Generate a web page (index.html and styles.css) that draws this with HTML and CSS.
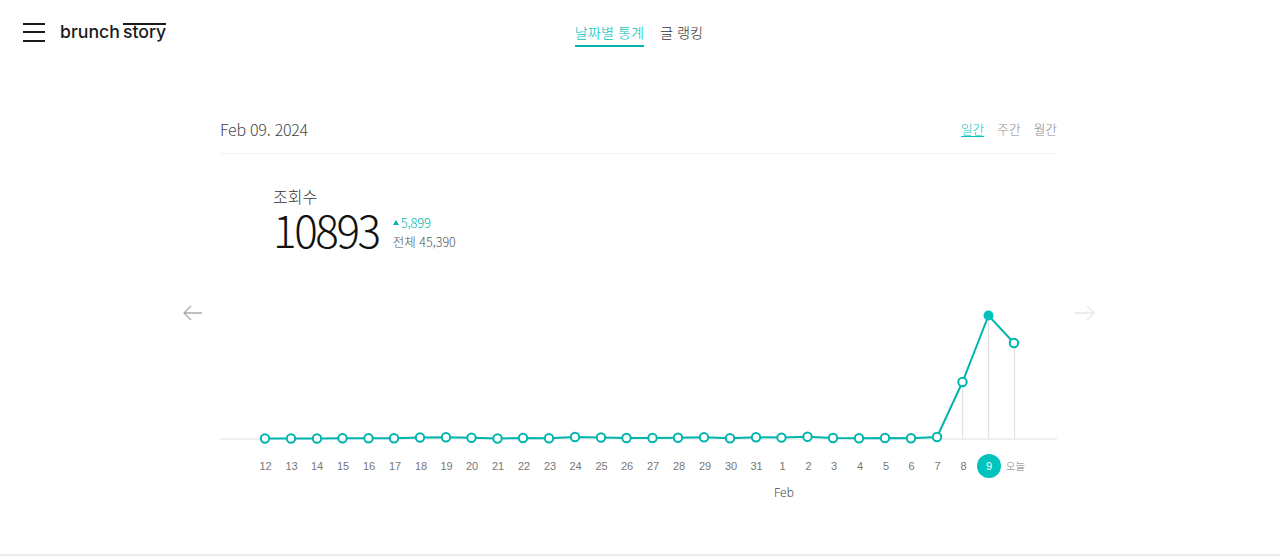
FILE: index.html
```html
<!DOCTYPE html>
<html lang="ko">
<head>
  <meta charset="UTF-8" />
  <meta name="viewport" content="width=device-width, initial-scale=1" />
  <title>brunchstory 통계</title>
  <link rel="stylesheet" href="styles.css">
</head>
<body>

  <header class="topbar">
    <div class="brand">
      <button class="menu-btn" type="button" aria-label="메뉴">
        <span></span><span></span><span></span>
      </button>
      <a class="logo" href="#">brunch<span class="logo-story">story</span></a>
    </div>
    <nav class="tabs">
      <a class="tab active" href="#">날짜별 통계</a>
      <a class="tab" href="#">글 랭킹</a>
    </nav>
  </header>

  <main class="stats">
    <div class="date-row">
      <div class="date">Feb 09. 2024</div>
      <div class="periods">
        <a class="period active" href="#">일간</a>
        <a class="period" href="#">주간</a>
        <a class="period" href="#">월간</a>
      </div>
    </div>

    <div class="summary">
      <div class="summary-title">조회수</div>
      <div class="summary-row">
        <div class="summary-count">10893</div>
        <div class="summary-side">
          <div class="summary-diff"><span class="up"></span>5,899</div>
          <div class="summary-total">전체 45,390</div>
        </div>
      </div>
    </div>

    <svg class="chart" width="1000" height="226" viewBox="180 290 1000 226">
      <!-- arrows -->
      <path class="arrow-prev" d="M202 313H184M191 306l-7 7 7 7" />
      <path class="arrow-next" d="M1075 313h19M1087 306l7 7-7 7" />

      <!-- base line and drops -->
      <line class="base" x1="220" y1="439" x2="1057" y2="439" />
      <line class="drop" x1="962.5" y1="382" x2="962.5" y2="439" />
      <line class="drop" x1="988.5" y1="315" x2="988.5" y2="439" />
      <line class="drop" x1="1014.5" y1="343" x2="1014.5" y2="439" />

      <polyline class="line" points="265,438.5 291,438.5 317,438.5 342.5,438.3 368.5,438.2 394,438.2 420,437.5 446,437.3 471.5,437.8 497.5,438.5 523,438 549,438.3 575,437 601,437.5 626.5,438 652.5,438 678,437.8 704,437.3 730,438.2 756,437.3 781.5,437.6 807.5,436.8 833,438 859,438.3 885,438 911,438.3 937,437 962.5,382 988.5,315.5 1014,343" />

      <circle class="dot" cx="265" cy="438.5" r="4.2" />
      <circle class="dot" cx="291" cy="438.5" r="4.2" />
      <circle class="dot" cx="317" cy="438.5" r="4.2" />
      <circle class="dot" cx="342.5" cy="438.3" r="4.2" />
      <circle class="dot" cx="368.5" cy="438.2" r="4.2" />
      <circle class="dot" cx="394" cy="438.2" r="4.2" />
      <circle class="dot" cx="420" cy="437.5" r="4.2" />
      <circle class="dot" cx="446" cy="437.3" r="4.2" />
      <circle class="dot" cx="471.5" cy="437.8" r="4.2" />
      <circle class="dot" cx="497.5" cy="438.5" r="4.2" />
      <circle class="dot" cx="523" cy="438" r="4.2" />
      <circle class="dot" cx="549" cy="438.3" r="4.2" />
      <circle class="dot" cx="575" cy="437" r="4.2" />
      <circle class="dot" cx="601" cy="437.5" r="4.2" />
      <circle class="dot" cx="626.5" cy="438" r="4.2" />
      <circle class="dot" cx="652.5" cy="438" r="4.2" />
      <circle class="dot" cx="678" cy="437.8" r="4.2" />
      <circle class="dot" cx="704" cy="437.3" r="4.2" />
      <circle class="dot" cx="730" cy="438.2" r="4.2" />
      <circle class="dot" cx="756" cy="437.3" r="4.2" />
      <circle class="dot" cx="781.5" cy="437.6" r="4.2" />
      <circle class="dot" cx="807.5" cy="436.8" r="4.2" />
      <circle class="dot" cx="833" cy="438" r="4.2" />
      <circle class="dot" cx="859" cy="438.3" r="4.2" />
      <circle class="dot" cx="885" cy="438" r="4.2" />
      <circle class="dot" cx="911" cy="438.3" r="4.2" />
      <circle class="dot" cx="937" cy="437" r="4.2" />
      <circle class="dot" cx="962.5" cy="382" r="4.2" />
      <circle class="dot dot-on" cx="988.5" cy="315.5" r="4" />
      <circle class="dot" cx="1014" cy="343" r="4.2" />

      <!-- day labels -->
      <circle class="today-mark" cx="989" cy="466" r="12" />
      <g class="days">
        <text x="265.5" y="470">12</text>
        <text x="291.5" y="470">13</text>
        <text x="317" y="470">14</text>
        <text x="343" y="470">15</text>
        <text x="369" y="470">16</text>
        <text x="395" y="470">17</text>
        <text x="421" y="470">18</text>
        <text x="446.5" y="470">19</text>
        <text x="472" y="470">20</text>
        <text x="498" y="470">21</text>
        <text x="524" y="470">22</text>
        <text x="550" y="470">23</text>
        <text x="575.5" y="470">24</text>
        <text x="601.5" y="470">25</text>
        <text x="627" y="470">26</text>
        <text x="653" y="470">27</text>
        <text x="679" y="470">28</text>
        <text x="705" y="470">29</text>
        <text x="731" y="470">30</text>
        <text x="756.5" y="470">31</text>
        <text x="782.5" y="470">1</text>
        <text x="808.5" y="470">2</text>
        <text x="834" y="470">3</text>
        <text x="860" y="470">4</text>
        <text x="886" y="470">5</text>
        <text x="911.5" y="470">6</text>
        <text x="937.5" y="470">7</text>
        <text x="963.5" y="470">8</text>
        <text class="day-on" x="989" y="470">9</text>
        <text class="day-today" x="1015.5" y="470">오늘</text>
      </g>
      <text class="month" x="784" y="497">Feb</text>
    </svg>
  </main>

  <div class="page-end"></div>

</body>
</html>
```

FILE: styles.css
```css
* {
  margin: 0;
  padding: 0;
  box-sizing: border-box;
}

body {
  background-color: #fff;
  color: #333;
  font-family: 'Noto Sans CJK KR', 'Noto Sans', sans-serif;
  height: 557px;
  overflow: hidden;
}

a {
  text-decoration: none;
  color: inherit;
}

.topbar {
  height: 64px;
  display: grid;
  grid-template-columns: 1fr auto 1fr;
  align-items: start;
}

.brand {
  display: flex;
  align-items: center;
  padding: 22px 0 0 23px;
  gap: 15px;
}

.menu-btn {
  width: 22px;
  height: 19px;
  border: none;
  background: none;
  display: flex;
  flex-direction: column;
  justify-content: space-between;
}

.menu-btn span {
  display: block;
  height: 2px;
  background-color: #1a1a1a;
}

.logo {
  font-family: 'Inter', sans-serif;
  font-size: 17.7px;
  font-weight: 500;
  color: #1a1a1a;
  line-height: 20px;
  display: flex;
}

.logo-story {
  border-top: 2px solid #1a1a1a;
  line-height: 14px;
  height: 19px;
  margin-left: 3px;
  margin-top: 1px;
}

.tabs {
  display: flex;
  gap: 16px;
  padding-top: 20px;
  margin-left: -2px;
}

.tab {
  font-size: 14.2px;
  font-weight: 300;
  color: #333;
  line-height: 25px;
  height: 27px;
}

.tab.active {
  color: #00c3bd;
  border-bottom: 2px solid #00b5ae;
}

.stats {
  margin-left: 220px;
  width: 837px;
  padding-top: 46px;
}

.date-row {
  height: 44px;
  display: flex;
  justify-content: space-between;
  align-items: flex-start;
  border-bottom: 1px solid #f2f2f2;
}

.date {
  font-size: 16px;
  font-weight: 300;
  line-height: 38px;
  letter-spacing: -0.25px;
  color: #444;
}

.periods {
  display: flex;
  gap: 13px;
  padding-top: 10px;
}

.period {
  font-size: 12.7px;
  font-weight: 300;
  line-height: 18px;
  color: #888;
}

.period.active {
  color: #00c3bd;
  border-bottom: 1px solid #00c3bd;
  height: 17px;
}

.summary {
  padding: 31px 0 0 53px;
  height: 136px;
}

.summary-title {
  font-size: 16px;
  font-weight: 300;
  line-height: 22px;
  color: #333;
}

.summary-row {
  display: flex;
  align-items: flex-start;
  gap: 14px;
}

.summary-count {
  font-size: 44px;
  font-weight: 300;
  line-height: 44px;
  letter-spacing: -2.4px;
  color: #111;
}

.summary-side {
  padding-top: 6px;
}

.summary-diff {
  font-size: 13px;
  font-weight: 300;
  line-height: 19px;
  letter-spacing: -0.2px;
  color: #00b5ae;
  display: flex;
  align-items: center;
  gap: 2px;
}

.up {
  width: 0;
  height: 0;
  border-left: 3px solid transparent;
  border-right: 3px solid transparent;
  border-bottom: 5px solid #00b5ae;
}

.summary-total {
  font-size: 12.5px;
  font-weight: 300;
  line-height: 20px;
  color: #555;
}

.chart {
  display: block;
  margin-left: -40px;
  overflow: visible;
}

.arrow-prev,
.arrow-next {
  fill: none;
  stroke-width: 1.3;
}

.arrow-prev {
  stroke: #aaa;
}

.arrow-next {
  stroke: #e8e8e8;
}

.base {
  stroke: #f0f0f0;
  stroke-width: 2;
}

.drop {
  stroke: #e2e2e2;
  stroke-width: 1.2;
}

.line {
  fill: none;
  stroke: #00b5ae;
  stroke-width: 2;
}

.dot {
  fill: #fff;
  stroke: #00b5ae;
  stroke-width: 2;
}

.dot-on {
  fill: #00c3bd;
  stroke: #00c3bd;
}

.today-mark {
  fill: #00c3bd;
}

.days text {
  font-family: 'Liberation Sans', sans-serif;
  font-size: 11px;
  fill: #777;
  text-anchor: middle;
}

.days .day-on {
  fill: #fff;
}

.days .day-today {
  font-family: 'Noto Sans CJK KR', sans-serif;
  font-size: 10.5px;
  font-weight: 300;
}

.month {
  font-family: 'Noto Sans', sans-serif;
  font-size: 12px;
  font-weight: 300;
  fill: #444;
  text-anchor: middle;
}

.page-end {
  position: absolute;
  left: 0;
  right: 0;
  top: 554px;
  height: 2px;
  background-color: #ededed;
}
```
